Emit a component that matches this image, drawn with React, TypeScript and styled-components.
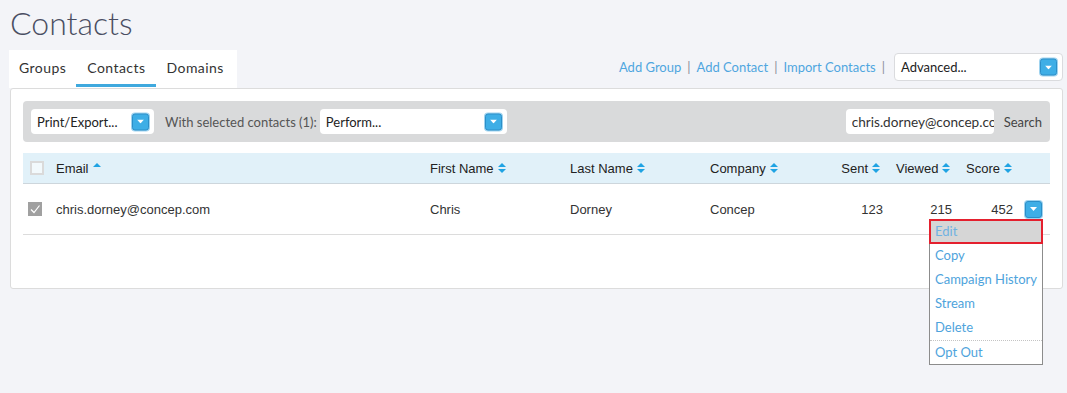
import React from 'react'
import styled, { createGlobalStyle } from 'styled-components'

const GlobalStyle = createGlobalStyle`
  body {
    margin: 0;
    background: #f3f4f8;
    font-family: Lato, "Open Sans", sans-serif;
    color: #333;
  }
`

const COLS = '33px 374px 140px 140px 120px 56px 70px 61px 1fr'

type Contact = {
  email: string
  first: string
  last: string
  company: string
  sent: number
  viewed: number
  score: number
}

const contacts: Contact[] = [
  { email: 'chris.dorney@concep.com', first: 'Chris', last: 'Dorney', company: 'Concep', sent: 123, viewed: 215, score: 452 },
]

const menuItems = ['Edit', 'Copy', 'Campaign History', 'Stream', 'Delete', 'Opt Out']

export default function App() {
  return (
    <Page>
      <GlobalStyle />
      <Title>Contacts</Title>
      <TopBar>
        <Tabs>
          <Tab>Groups</Tab>
          <Tab $active>Contacts</Tab>
          <Tab>Domains</Tab>
        </Tabs>
        <Actions>
          <ActionLink>Add Group</ActionLink>
          <Sep>|</Sep>
          <ActionLink>Add Contact</ActionLink>
          <Sep>|</Sep>
          <ActionLink>Import Contacts</ActionLink>
          <Sep>|</Sep>
          <Select $width={169} $height={28} $bordered>
            Advanced...
            <DropButton />
          </Select>
        </Actions>
      </TopBar>

      <Panel>
        <Toolbar>
          <Select $width={123} $height={25}>
            Print/Export...
            <DropButton />
          </Select>
          <ToolbarLabel>With selected contacts (1):</ToolbarLabel>
          <Select $width={187} $height={25}>
            Perform...
            <DropButton />
          </Select>
          <Spacer />
          <SearchInput defaultValue="chris.dorney@concep.com" />
          <SearchLabel>Search</SearchLabel>
        </Toolbar>

        <HeaderRow>
          <Cell><Checkbox /></Cell>
          <HeadCell>Email <SortIcon up /></HeadCell>
          <HeadCell>First Name <SortIcon /></HeadCell>
          <HeadCell>Last Name <SortIcon /></HeadCell>
          <HeadCell>Company <SortIcon /></HeadCell>
          <HeadCell $right $pad="0 6px 0 0">Sent <SortIcon /></HeadCell>
          <HeadCell $pad="0 0 0 10px">Viewed <SortIcon /></HeadCell>
          <HeadCell $pad="0 0 0 10px">Score <SortIcon /></HeadCell>
          <Cell />
        </HeaderRow>

        {contacts.map(c => (
          <BodyRow key={c.email}>
            <Cell $pad="0 0 0 5px"><Checkbox checked /></Cell>
            <Cell>{c.email}</Cell>
            <Cell>{c.first}</Cell>
            <Cell>{c.last}</Cell>
            <Cell>{c.company}</Cell>
            <Cell $right $pad="0 3px 0 0">{c.sent}</Cell>
            <Cell $right $pad="0 4px 0 0">{c.viewed}</Cell>
            <Cell $right $pad="0 4px 0 0">{c.score}</Cell>
            <Cell $pad="0 0 0 8px">
              <RowAction>
                <DropButton />
                <Menu>
                  {menuItems.map((m, i) => (
                    <MenuItem key={m} $active={i === 0} $divider={m === 'Opt Out'}>{m}</MenuItem>
                  ))}
                </Menu>
              </RowAction>
            </Cell>
          </BodyRow>
        ))}
      </Panel>
    </Page>
  )
}

function DropButton() {
  return (
    <BlueButton>
      <svg width="7" height="4" viewBox="0 0 7 4">
        <path d="M0 0 L7 0 L3.5 4 Z" fill="#fff" />
      </svg>
    </BlueButton>
  )
}

function SortIcon({ up }: { up?: boolean }) {
  return (
    <SortSvg width="8" height="10" viewBox="0 0 8 10">
      <path d="M0 4 L4 0 L8 4 Z" fill="#1fa3e3" />
      {!up && <path d="M0 6 L8 6 L4 10 Z" fill="#1fa3e3" />}
    </SortSvg>
  )
}

function Checkbox({ checked }: { checked?: boolean }) {
  if (!checked) return <EmptyBox />
  return (
    <CheckedBox>
      <svg width="14" height="14" viewBox="0 0 14 14">
        <path d="M3 7.5 L6 10.5 L11.5 3.5" stroke="#fff" strokeWidth="1.2" fill="none" />
      </svg>
    </CheckedBox>
  )
}

const Page = styled.div`
  box-sizing: border-box;
  min-height: 393px;
  padding: 0 4px 0 9px;
`

const Title = styled.h1`
  margin: 0 0 5px 1px;
  font-weight: 300;
  font-size: 32px;
  line-height: 46px;
  color: #4a4e62;
`

const TopBar = styled.div`
  display: flex;
  justify-content: space-between;
  align-items: center;
  height: 38px;
  margin-top: -1px;
`

const Tabs = styled.div`
  display: flex;
  height: 38px;
  background: #fff;
`

const Tab = styled.div<{ $active?: boolean }>`
  display: flex;
  align-items: center;
  padding: 0 10px 0 11px;
  font-size: 14px;
  letter-spacing: 0.45px;
  color: #333;
  border-bottom: 3px solid ${p => (p.$active ? '#3fa9de' : 'transparent')};
  margin-bottom: 1px;
  &:first-child { padding-left: 10px; }
  &:last-child { padding-right: 13px; }
`

const Actions = styled.div`
  display: flex;
  align-items: center;
  padding-bottom: 4px;
  font-size: 13px;
`

const ActionLink = styled.span`
  color: #4fa6df;
`

const Sep = styled.span`
  color: #8a8f99;
  margin: 0 6px;
  &:last-of-type { margin-right: 9px; }
`

const Select = styled.div<{ $width: number; $height: number; $bordered?: boolean }>`
  position: relative;
  display: flex;
  align-items: center;
  box-sizing: border-box;
  width: ${p => p.$width}px;
  height: ${p => p.$height}px;
  padding-left: 6px;
  background: #fff;
  border: ${p => (p.$bordered ? '1px solid #dadbde' : 'none')};
  border-radius: 4px;
  font-size: 13px;
  color: #222;
  & > span:last-child {
    position: absolute;
    right: 5px;
    top: 50%;
    transform: translateY(-50%);
  }
`

const BlueButton = styled.span`
  display: inline-flex;
  align-items: center;
  justify-content: center;
  box-sizing: border-box;
  width: 17px;
  height: 17px;
  background: #3eaee6;
  border: 1px solid #2c8fc8;
  border-radius: 3px;
  box-shadow: 0 0 0 1px #9fd3ef;
`

const Panel = styled.div`
  margin: 0 0 0 1px;
  padding: 12px 12px 53px 12px;
  background: #fff;
  border: 1px solid #dcdcdc;
  border-radius: 3px;
`

const Toolbar = styled.div`
  display: flex;
  align-items: center;
  height: 41px;
  padding: 0 8px;
  background: #d9dadb;
  border-radius: 4px;
  margin-bottom: 11px;
`

const ToolbarLabel = styled.span`
  margin: 0 3px 0 11px;
  font-size: 13px;
  color: #555;
`

const Spacer = styled.div`
  flex: 1;
`

const SearchInput = styled.input`
  box-sizing: border-box;
  width: 148px;
  height: 25px;
  padding: 0 0 0 6px;
  border: none;
  border-radius: 4px;
  outline: none;
  font-family: Lato, sans-serif;
  font-size: 13.6px;
  color: #333;
`

const SearchLabel = styled.span`
  margin-left: 10px;
  font-size: 13px;
  color: #444;
`

const HeaderRow = styled.div`
  display: grid;
  grid-template-columns: ${COLS};
  height: 30px;
  background: #e1f1f9;
  border-bottom: 1px solid #cdd6dc;
  font-family: "Liberation Sans", Arial, sans-serif;
  font-size: 13px;
  color: #222;
`

const BodyRow = styled.div`
  display: grid;
  grid-template-columns: ${COLS};
  height: 50px;
  border-bottom: 1px solid #dcdcdc;
  font-family: "Liberation Sans", Arial, sans-serif;
  font-size: 13px;
  color: #333;
`

const Cell = styled.div<{ $right?: boolean; $pad?: string }>`
  display: flex;
  align-items: center;
  justify-content: ${p => (p.$right ? 'flex-end' : 'flex-start')};
  padding: ${p => p.$pad || '0'};
  white-space: nowrap;
`

const HeadCell = styled(Cell)`
  gap: 3px;
`

const SortSvg = styled.svg`
  margin-left: 1px;
`

const EmptyBox = styled.span`
  display: block;
  box-sizing: border-box;
  width: 14px;
  height: 14px;
  margin-left: 7px;
  border: 2px solid #dadada;
  background: #f2f9fc;
`

const CheckedBox = styled.span`
  display: block;
  width: 14px;
  height: 14px;
  background: #a0a0a0;
`

const RowAction = styled.div`
  position: relative;
  display: flex;
`

const Menu = styled.div`
  position: absolute;
  top: calc(100% + 1px);
  right: -1px;
  z-index: 2;
  width: 114px;
  box-sizing: border-box;
  background: #fff;
  border: 1px solid #8c8c8c;
  font-family: Lato, sans-serif;
  font-size: 13px;
`

const MenuItem = styled.div<{ $active?: boolean; $divider?: boolean }>`
  box-sizing: border-box;
  height: ${p => (p.$active ? '25px' : '24px')};
  line-height: ${p => (p.$active ? '21px' : '23px')};
  margin: ${p => (p.$active ? '-1px -1px 0 -1px' : '0')};
  padding-left: ${p => (p.$active ? '4px' : '5px')};
  white-space: nowrap;
  color: ${p => (p.$active ? '#6fb2e2' : '#4ea3dc')};
  background: ${p => (p.$active ? '#d6d6d6' : 'transparent')};
  border: ${p => (p.$active ? '2px solid #e4202e' : 'none')};
  border-top: ${p => (p.$divider ? '1px dotted #c4c4c4' : p.$active ? '2px solid #e4202e' : 'none')};
`
